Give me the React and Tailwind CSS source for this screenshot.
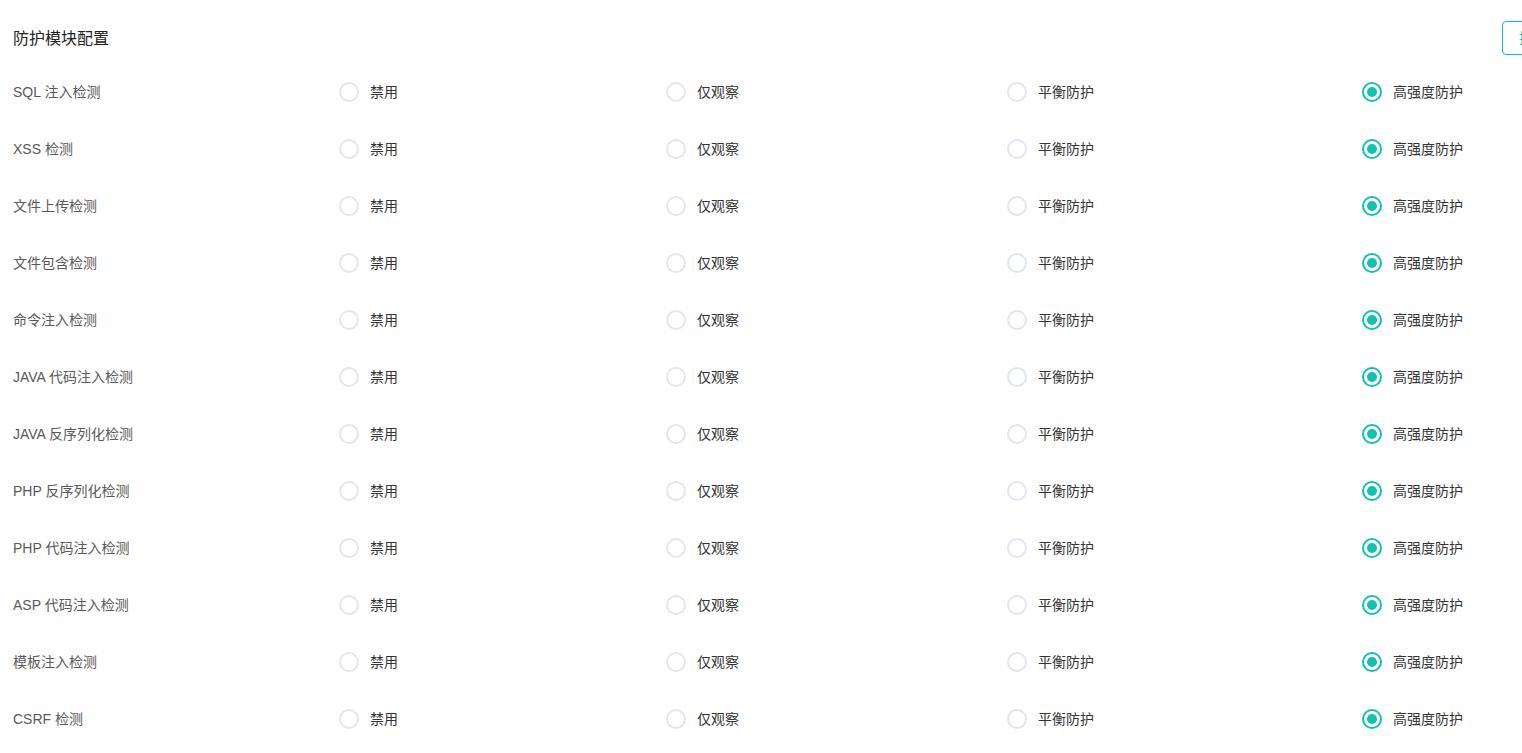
import React from 'react'

const rules = [
  'SQL 注入检测',
  'XSS 检测',
  '文件上传检测',
  '文件包含检测',
  '命令注入检测',
  'JAVA 代码注入检测',
  'JAVA 反序列化检测',
  'PHP 反序列化检测',
  'PHP 代码注入检测',
  'ASP 代码注入检测',
  '模板注入检测',
  'CSRF 检测',
]

const levels = ['禁用', '仅观察', '平衡防护', '高强度防护']

function Radio({ label, checked }) {
  return (
    <label className="flex items-center cursor-pointer">
      <span
        className={
          checked
            ? 'w-5 h-5 rounded-full border-2 border-[#14c0b0] flex items-center justify-center'
            : 'w-5 h-5 rounded-full border-2 border-[#e2e6ee]'
        }
      >
        {checked && <span className="w-[10px] h-[10px] rounded-full bg-[#14c0b0]" />}
      </span>
      <span className="ml-[11px] text-sm text-[#333]">{label}</span>
    </label>
  )
}

export default function App() {
  return (
    <div className="w-full overflow-hidden bg-white" style={{ fontFamily: '"Liberation Sans", "Noto Sans CJK SC", sans-serif' }}>
      <div className="w-[1577px] px-[13px]">
        <div className="h-[76.5px] flex items-center">
          <h2 className="flex-1 mt-[2px] text-base text-[#222]">防护模块配置</h2>
          <button className="h-[34px] px-4 border border-[#14c0b0] rounded text-sm text-[#14c0b0]">提交</button>
        </div>

        <div className="flex flex-col gap-[27px]">
          {rules.map((rule) => (
            <div key={rule} className="flex items-center h-[30px]">
              <div className="w-[326px] text-sm text-[#595959]">{rule}</div>
              <div className="w-[1124px] flex items-center justify-between">
                {levels.map((lv, i) => (
                  <Radio key={lv} label={lv} checked={i === 3} />
                ))}
              </div>
            </div>
          ))}
        </div>
      </div>
    </div>
  )
}
